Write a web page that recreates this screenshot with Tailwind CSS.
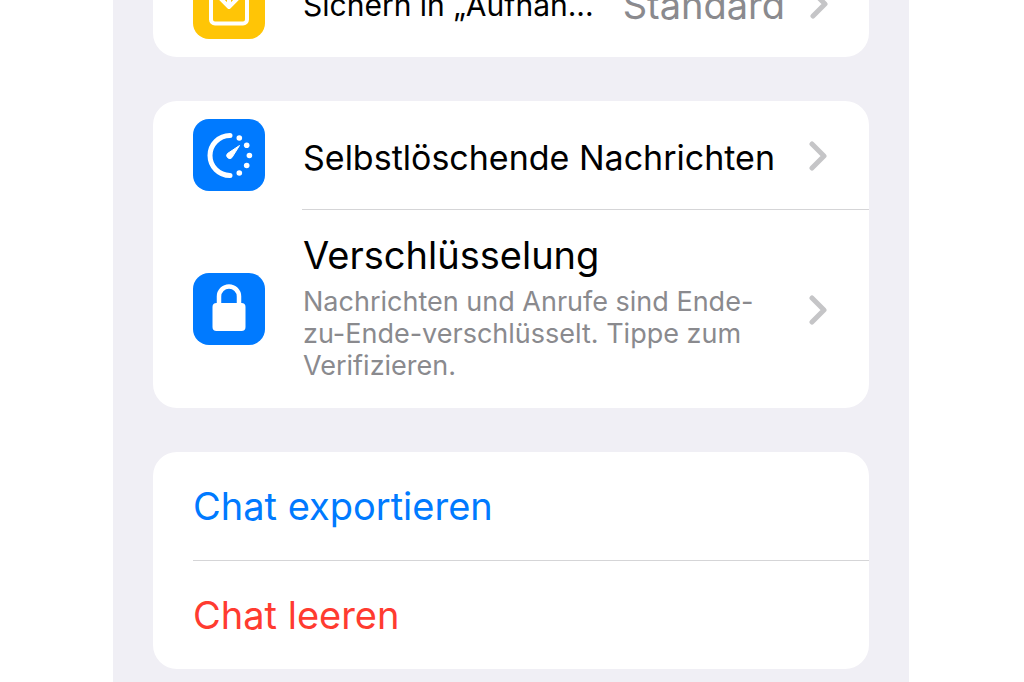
<!DOCTYPE html>
<html lang="de">
    <head>
        <meta charset="UTF-8" />
        <meta name="viewport" content="width=device-width, initial-scale=1.0" />
        <script src="https://cdn.jsdelivr.net/npm/@tailwindcss/browser@4"></script>
        <title>Chat-Info</title>
    </head>

    <body class="bg-white pl-[113px] pr-[115px] overflow-hidden font-['Inter',sans-serif] text-black">
        <main class="flex flex-col gap-11 bg-[#f0eff5] px-10 pb-10 -mt-[51px]">
            <section class="rounded-3xl bg-white overflow-hidden">
                <button type="button" class="flex w-full h-[108px] items-center pl-10 pr-10 text-left">
                    <svg class="size-[72px] shrink-0 rounded-2xl bg-[#ffc506]" viewBox="0 0 72 72" fill="none" stroke="#fff" stroke-width="4" stroke-linecap="round" stroke-linejoin="round">
                        <path d="M27 18h-5a4 4 0 0 0-4 4v30.500a4 4 0 0 0 4 4h28a4 4 0 0 0 4-4V22a4 4 0 0 0-4-4h-5" />
                        <path d="M36 12v28M27.500 31.500l8.500 8.500 8.500-8.500" />
                    </svg>
                    <span class="ml-[38px] flex-1 whitespace-nowrap pt-1 text-[30px]">Sichern in „Aufnah...</span>
                    <span class="mr-6 pt-1 text-[38px] text-[#8a8a8e]">Standard</span>
                    <svg class="w-5 h-8 shrink-0" viewBox="0 0 20 32" fill="none" stroke="#c5c5c7" stroke-width="5" stroke-linecap="round" stroke-linejoin="round">
                        <path d="M4 5l12 12L4 29" />
                    </svg>
                </button>
            </section>

            <section class="rounded-3xl bg-white overflow-hidden">
                <button type="button" class="flex w-full h-[108px] items-center pl-10 pr-10 text-left">
                    <svg class="size-[72px] shrink-0 rounded-2xl bg-[#007aff]" viewBox="0 0 72 72" fill="none">
                        <path d="M37 16.500a20 20 0 0 0 0 40" stroke="#fff" stroke-width="5" stroke-linecap="round" />
                        <path d="M46.500 26.500L39 38.500a3 3 0 1 1-4.500-4z" fill="#fff" stroke="#fff" stroke-linejoin="round" />
                        <g fill="#fff">
                            <circle cx="46.300" cy="19" r="2.800" />
                            <circle cx="53.700" cy="26.300" r="2.800" />
                            <circle cx="56.400" cy="36.500" r="2.800" />
                            <circle cx="53.700" cy="46.500" r="2.800" />
                            <circle cx="46.300" cy="54" r="2.800" />
                        </g>
                    </svg>
                    <span class="ml-[38px] flex-1 whitespace-nowrap pt-1 text-[34px]">Selbstlöschende Nachrichten</span>
                    <svg class="w-5 h-8 shrink-0" viewBox="0 0 20 32" fill="none" stroke="#c5c5c7" stroke-width="5" stroke-linecap="round" stroke-linejoin="round">
                        <path d="M3 5l12 12L3 29" />
                    </svg>
                </button>
                <hr class="ml-[149px] border-[#d5d5d7]" />
                <button type="button" class="flex w-full items-center pl-10 pr-10 text-left">
                    <svg class="size-[72px] shrink-0 rounded-2xl bg-[#007aff]" viewBox="0 0 72 72" fill="none">
                        <path d="M26 32V23.500a10 10 0 0 1 20 0V32" stroke="#fff" stroke-width="4.500" />
                        <rect x="19.500" y="30" width="33" height="28" rx="4" fill="#fff" />
                    </svg>
                    <span class="ml-[38px] flex-1 pt-[22px] pb-[26px]">
                        <span class="block text-[38px] leading-[46px]">Verschlüsselung</span>
                        <span class="mt-2 block text-[27px] leading-8 text-[#8a8a8e]">Nachrichten und Anrufe sind Ende-zu-Ende-verschlüsselt. Tippe zum Verifizieren.</span>
                    </span>
                    <svg class="ml-6 w-5 h-8 shrink-0" viewBox="0 0 20 32" fill="none" stroke="#c5c5c7" stroke-width="5" stroke-linecap="round" stroke-linejoin="round">
                        <path d="M3 5l12 12L3 29" />
                    </svg>
                </button>
            </section>

            <section class="rounded-3xl bg-white overflow-hidden">
                <button type="button" class="block w-full h-[108px] px-10 text-left text-[38px] text-[#007aff]">Chat exportieren</button>
                <hr class="ml-10 border-[#d5d5d7]" />
                <button type="button" class="block w-full h-[108px] px-10 text-left text-[38px] text-[#ff3b30]">Chat leeren</button>
            </section>
        </main>
    </body>
</html>
